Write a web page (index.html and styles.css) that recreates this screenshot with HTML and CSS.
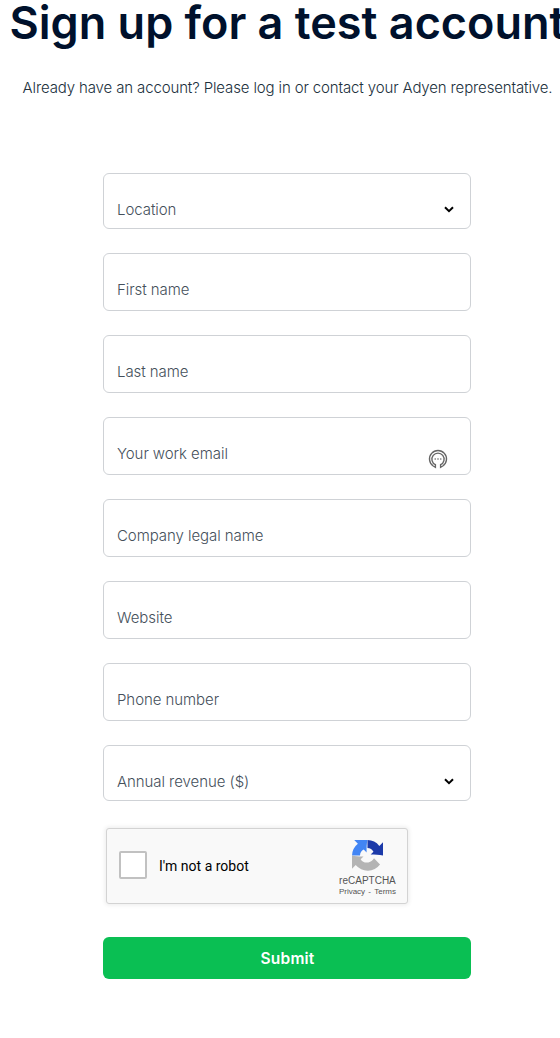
FILE: index.html
```
<!DOCTYPE html>
<html lang="en">
<head>
    <meta charset="UTF-8">
    <meta name="viewport" content="width=device-width, initial-scale=1.0">
    <title>Sign up for a test account</title>
    <link rel="stylesheet" href="styles.css">
</head>
<body>
    <main class="signup">
        <h1 class="title">Sign up for a test account</h1>
        <p class="subtitle">Already have an account? Please log in or contact your Adyen representative.</p>

        <form class="form">
            <div class="field select">
                <span class="label">Location</span>
                <svg class="chevron" width="10" height="7" viewBox="0 0 10 7"><path d="M1 1.2l4 3.9 4-3.9" fill="none" stroke="#000" stroke-width="2"/></svg>
            </div>
            <div class="field"><span class="label">First name</span></div>
            <div class="field"><span class="label">Last name</span></div>
            <div class="field">
                <span class="label">Your work email</span>
                <svg class="manager" width="20" height="20" viewBox="0 0 20 20">
                    <g fill="none" stroke="#666" stroke-width="1.4">
                        <path d="M5.2 17A8.5 8.5 0 1 1 14.8 17"/>
                        <path d="M5.2 17l2.2 1.3v-2.6A6.1 6.1 0 1 1 12.6 15.7v2.6l2.2-1.3"/>
                    </g>
                    <g fill="#666">
                        <circle cx="7.2" cy="10" r=".8"/>
                        <circle cx="10" cy="10" r=".8"/>
                        <circle cx="12.8" cy="10" r=".8"/>
                    </g>
                </svg>
            </div>
            <div class="field"><span class="label">Company legal name</span></div>
            <div class="field"><span class="label">Website</span></div>
            <div class="field"><span class="label">Phone number</span></div>
            <div class="field select">
                <span class="label">Annual revenue ($)</span>
                <svg class="chevron" width="10" height="7" viewBox="0 0 10 7"><path d="M1 1.2l4 3.9 4-3.9" fill="none" stroke="#000" stroke-width="2"/></svg>
            </div>

            <div class="captcha">
                <span class="checkbox"></span>
                <span class="robot">I'm not a robot</span>
                <div class="brand">
                    <svg width="31" height="31" viewBox="0 0 64 64">
                        <path fill="#1c3aa9" d="M64 31.96V4.57l-7.57 7.57A31.95 31.95 0 0 0 31.95.03v16.5a14.7 14.7 0 0 1 12.4 7.68l-5.9 5.9c9 0 17.5.2 25.55 1.85z"/>
                        <path fill="#4285f4" d="M31.95.03H4.57l7.57 7.57A31.95 31.95 0 0 0 .03 32.08h16.5a14.7 14.7 0 0 1 7.68-12.4l5.9 5.9c0-9 .1-18.5 1.84-25.55z"/>
                        <path fill="#b4b4b4" d="M.03 32.03v27.4l7.57-7.57a31.96 31.96 0 0 0 50.26-1.4L45.45 37.9a16.6 16.6 0 0 1-5.07 5.7c-2.2 1.7-5.3 3.1-9.6 3.1-6 0-10.2-2.5-12.9-7l5.8-5.8C16 33.95 7.1 33.8.03 32.03z"/>
                    </svg>
                    <span class="brand-name">reCAPTCHA</span>
                    <span class="links">Privacy&nbsp;-&nbsp;Terms</span>
                </div>
            </div>

            <button class="submit" type="button">Submit</button>
        </form>
    </main>
</body>
</html>
```
FILE: styles.css
```
* {
    margin: 0;
    padding: 0;
    box-sizing: border-box;
}

body {
    font-family: Inter, "Liberation Sans", sans-serif;
    background: #fff;
    overflow: hidden;
}

.signup {
    width: 574px;
    display: flex;
    flex-direction: column;
    align-items: center;
}

.title {
    font-size: 45px;
    font-weight: 600;
    line-height: 56px;
    margin-top: -5px;
    padding-left: 1px;
    white-space: nowrap;
    color: #00112c;
}

.subtitle {
    margin-top: 25px;
    padding-left: 1px;
    font-size: 15px;
    font-weight: 300;
    line-height: 24px;
    letter-spacing: -0.13px;
    white-space: nowrap;
    color: #20303c;
}

.form {
    width: 368px;
    margin-top: 73px;
    display: flex;
    flex-direction: column;
    gap: 24px;
}

.field {
    height: 58px;
    border: 1px solid #cfd2d6;
    border-radius: 6px;
    padding: 24px 16px 0 13px;
    display: flex;
    justify-content: space-between;
}

.select {
    height: 56px;
}

.label {
    font-size: 15px;
    font-weight: 300;
    line-height: 24px;
    letter-spacing: -0.06px;
    color: #45505b;
}

.chevron {
    margin-top: 8px;
}

.manager {
    margin: 7px 6px 0 0;
}

.captcha {
    width: 302px;
    height: 76px;
    margin: 3px 0 0 3px;
    padding: 0 11px 0 12px;
    display: flex;
    align-items: center;
    background: #f9f9f9;
    border: 1px solid #d3d3d3;
    border-radius: 3px;
    box-shadow: 0 0 4px 1px rgba(0, 0, 0, 0.08);
    font-family: Roboto, "Liberation Sans", sans-serif;
}

.checkbox {
    width: 28px;
    height: 28px;
    margin-bottom: 2px;
    background: #fff;
    border: 2px solid #c1c1c1;
    border-radius: 2px;
}

.robot {
    margin-left: 12px;
    font-size: 14px;
    line-height: 17px;
    color: #000;
}

.brand {
    margin-left: auto;
    padding-top: 5px;
    display: flex;
    flex-direction: column;
    align-items: center;
    font-family: "Liberation Sans", sans-serif;
    color: #555;
}

.brand-name {
    margin-top: 4px;
    font-size: 10px;
    line-height: 12px;
}

.links {
    font-size: 8px;
    line-height: 10px;
    word-spacing: 1px;
}

.submit {
    height: 42px;
    margin-top: 9px;
    padding-left: 1px;
    border: none;
    border-radius: 6px;
    background: #0abf53;
    color: #fff;
    font-family: inherit;
    font-size: 15.5px;
    font-weight: 600;
    letter-spacing: 0.2px;
    cursor: pointer;
}
```
